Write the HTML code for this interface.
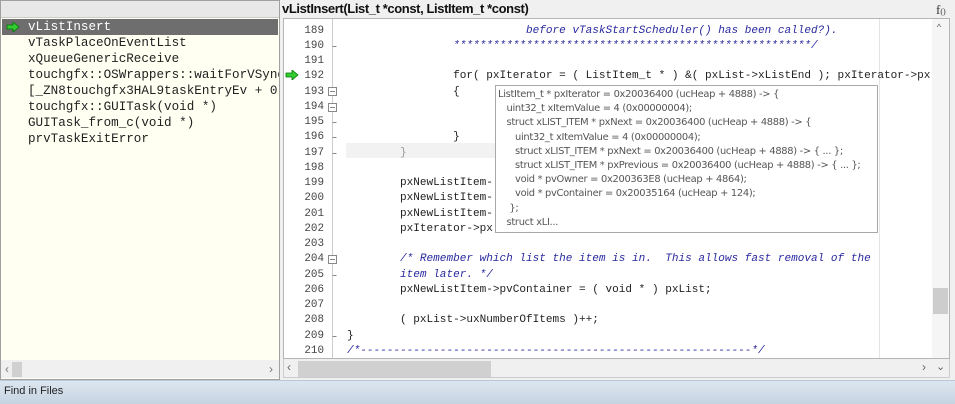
<!DOCTYPE html>
<html><head><meta charset="utf-8"><style>
*{margin:0;padding:0;box-sizing:border-box}
body{width:955px;height:404px;overflow:hidden;background:#f0f0f0;position:relative;font-family:"Liberation Sans",sans-serif}
.abs{position:absolute}
#left{left:0;top:0;width:280px;height:380px;background:#fffff2;border:1px solid #a0a0a0;overflow:hidden}
#lhead{left:0;top:0;width:278px;height:17px;background:#e8e8e8;border-bottom:1px solid #ccc}
.ls{position:absolute;left:27px;font-family:"Liberation Mono",monospace;font-size:12.6px;color:#222;line-height:16px;white-space:pre}
#sel{left:1px;top:18px;width:276px;height:16px;background:#6e6e6e}
.mono{font-family:"Liberation Mono",monospace;font-size:11.05px;white-space:pre;line-height:15.24px}
#code{left:283px;top:18px;width:667px;height:341px;background:#fff;border:1px solid #b5b5b5;overflow:hidden}
.ln{position:absolute;left:0;width:40px;text-align:right;color:#444;font-size:10.9px}
.cl{position:absolute;left:63px;color:#222}
.cm{color:#2a2aa0;font-style:italic}
.tip{left:495px;top:85px;width:383px;height:148px;background:#fff;border:1px solid #a8a8a8;font-family:"DejaVu Sans",sans-serif;font-size:9.9px;color:#555;line-height:14.2px;padding:2px 0 0 2px;white-space:pre;letter-spacing:-0.3px}
</style></head><body>
<div id="left" class="abs">
 <div id="lhead" class="abs"></div>
 <div id="sel" class="abs"></div>
 <svg class="abs" style="left:5px;top:21px" width="14" height="10"><path d="M1 3h6V0l6 5-6 5V7H1z" fill="#3c3" stroke="#070" stroke-width=".8"/></svg>
 <div class="ls" style="top:18px;color:#fff">vListInsert</div>
 <div class="ls" style="top:34px">vTaskPlaceOnEventList</div>
 <div class="ls" style="top:50px">xQueueGenericReceive</div>
 <div class="ls" style="top:66px">touchgfx::OSWrappers::waitForVSync</div>
 <div class="ls" style="top:82px">[_ZN8touchgfx3HAL9taskEntryEv + 0</div>
 <div class="ls" style="top:98px">touchgfx::GUITask(void *)</div>
 <div class="ls" style="top:114px">GUITask_from_c(void *)</div>
 <div class="ls" style="top:130px">prvTaskExitError</div>
 <div class="abs" style="left:0;top:359px;width:278px;height:18px;background:#f0f0f0"></div>
 <div class="abs" style="left:4px;top:361px;font-size:12px;color:#777">‹</div>
 <div class="abs" style="left:11px;top:361px;width:10px;height:15px;background:#d0d0d0"></div>
 <div class="abs" style="left:268px;top:361px;font-size:12px;color:#777">›</div>
</div>
<div class="abs" style="left:282px;top:1px;font-size:13px;font-weight:bold;color:#111;letter-spacing:-0.4px">vListInsert(List_t *const, ListItem_t *const)</div>
<div class="abs" style="left:936px;top:2px;font-family:'Liberation Serif',serif;font-size:13px;color:#333">f<span style="font-size:8px">()</span></div>
<div id="code" class="abs mono">
 <div class="abs" style="left:62px;top:124px;width:530px;height:15px;background:#f2f2f2"></div>
 <div class="abs" style="left:595px;top:0;width:1px;height:340px;background:#e4e4e4"></div>
 <div class="abs" style="left:48px;top:0;width:1px;height:340px;background:#ccc"></div>
 <div class="ln" style="top:5px">189</div><div class="cl cm" style="top:5px">                           before vTaskStartScheduler() has been called?).</div>
 <div class="ln" style="top:20px">190</div><div class="cl cm" style="top:20px">                ******************************************************/</div>
 <div class="ln" style="top:35px">191</div>
 <div class="ln" style="top:50px">192</div><div class="cl" style="top:50px">                for( pxIterator = ( ListItem_t * ) &amp;( pxList-&gt;xListEnd ); pxIterator-&gt;px</div>
 <div class="ln" style="top:66px">193</div><div class="cl" style="top:66px">                {</div>
 <div class="ln" style="top:81px">194</div><div class="cl cm" style="top:81px">                                                                 nted</div>
 <div class="ln" style="top:96px">195</div>
 <div class="ln" style="top:111px">196</div><div class="cl" style="top:111px">                }</div>
 <div class="ln" style="top:127px">197</div><div class="cl" style="top:127px;color:#999">        }</div>
 <div class="ln" style="top:142px">198</div>
 <div class="ln" style="top:157px">199</div><div class="cl" style="top:157px">        pxNewListItem-</div>
 <div class="ln" style="top:172px">200</div><div class="cl" style="top:172px">        pxNewListItem-</div>
 <div class="ln" style="top:188px">201</div><div class="cl" style="top:188px">        pxNewListItem-</div>
 <div class="ln" style="top:203px">202</div><div class="cl" style="top:203px">        pxIterator-&gt;px</div>
 <div class="ln" style="top:218px">203</div>
 <div class="ln" style="top:233px">204</div><div class="cl cm" style="top:233px">        /* Remember which list the item is in.  This allows fast removal of the</div>
 <div class="ln" style="top:249px">205</div><div class="cl cm" style="top:249px">        item later. */</div>
 <div class="ln" style="top:264px">206</div><div class="cl" style="top:264px">        pxNewListItem-&gt;pvContainer = ( void * ) pxList;</div>
 <div class="ln" style="top:279px">207</div>
 <div class="ln" style="top:294px">208</div><div class="cl" style="top:294px">        ( pxList-&gt;uxNumberOfItems )++;</div>
 <div class="ln" style="top:310px">209</div><div class="cl" style="top:310px">}</div>
 <div class="ln" style="top:325px">210</div><div class="cl cm" style="top:325px">/*-----------------------------------------------------------*/</div>
 <svg class="abs" style="left:43px;top:0" width="14" height="340"><g fill="#fff" stroke="#888" stroke-width="1"><rect x="1.5" y="68.5" width="8" height="8"/><rect x="1.5" y="84.5" width="8" height="8"/><rect x="1.5" y="236.5" width="8" height="8"/></g><g stroke="#888"><path d="M3 72.5h5M3 88.5h5M3 240.5h5"/><path d="M5.5 27.5h4M5.5 103.5h4M5.5 118.5h4M5.5 134.5h4M5.5 256.5h4M5.5 317.5h4"/></g></svg>
 <div class="abs" style="left:648px;top:0;width:17px;height:340px;background:#f5f5f5"></div>
 <div class="abs" style="left:652px;top:3px;font-size:10px;color:#666">⌃</div>
 <div class="abs" style="left:649px;top:269px;width:15px;height:26px;background:#cdcdcd"></div>
</div>
<svg class="abs" style="left:285px;top:70px" width="14" height="10"><path d="M1 3h6V0l6 5-6 5V7H1z" fill="#3c3" stroke="#070" stroke-width=".8"/></svg>
<div class="abs" style="left:283px;top:359px;width:667px;height:19px;background:#f0f0f0;border:1px solid #ccc;border-top:none"></div>
<div class="abs" style="left:287px;top:360px;font-size:12px;color:#666">‹</div>
<div class="abs" style="left:298px;top:361px;width:193px;height:16px;background:#d0d0d0"></div>
<div class="abs" style="left:922px;top:360px;font-size:12px;color:#666">›</div>
<div class="abs" style="left:936px;top:360px;font-size:11px;color:#666">⌄</div>
<div class="abs tip">ListItem_t * pxIterator = 0x20036400 (ucHeap + 4888) -&gt; {
   uint32_t xItemValue = 4 (0x00000004);
   struct xLIST_ITEM * pxNext = 0x20036400 (ucHeap + 4888) -&gt; {
      uint32_t xItemValue = 4 (0x00000004);
      struct xLIST_ITEM * pxNext = 0x20036400 (ucHeap + 4888) -&gt; { ... };
      struct xLIST_ITEM * pxPrevious = 0x20036400 (ucHeap + 4888) -&gt; { ... };
      void * pvOwner = 0x200363E8 (ucHeap + 4864);
      void * pvContainer = 0x20035164 (ucHeap + 124);
    };
   struct xLI...</div>
<div class="abs" style="left:0;top:380px;width:955px;height:24px;background:linear-gradient(#dce6f0,#c6d4e2);border-top:1px solid #b8c8d8"></div>
<div class="abs" style="left:4px;top:385px;font-size:11px;color:#222">Find in Files</div>
</body></html>
